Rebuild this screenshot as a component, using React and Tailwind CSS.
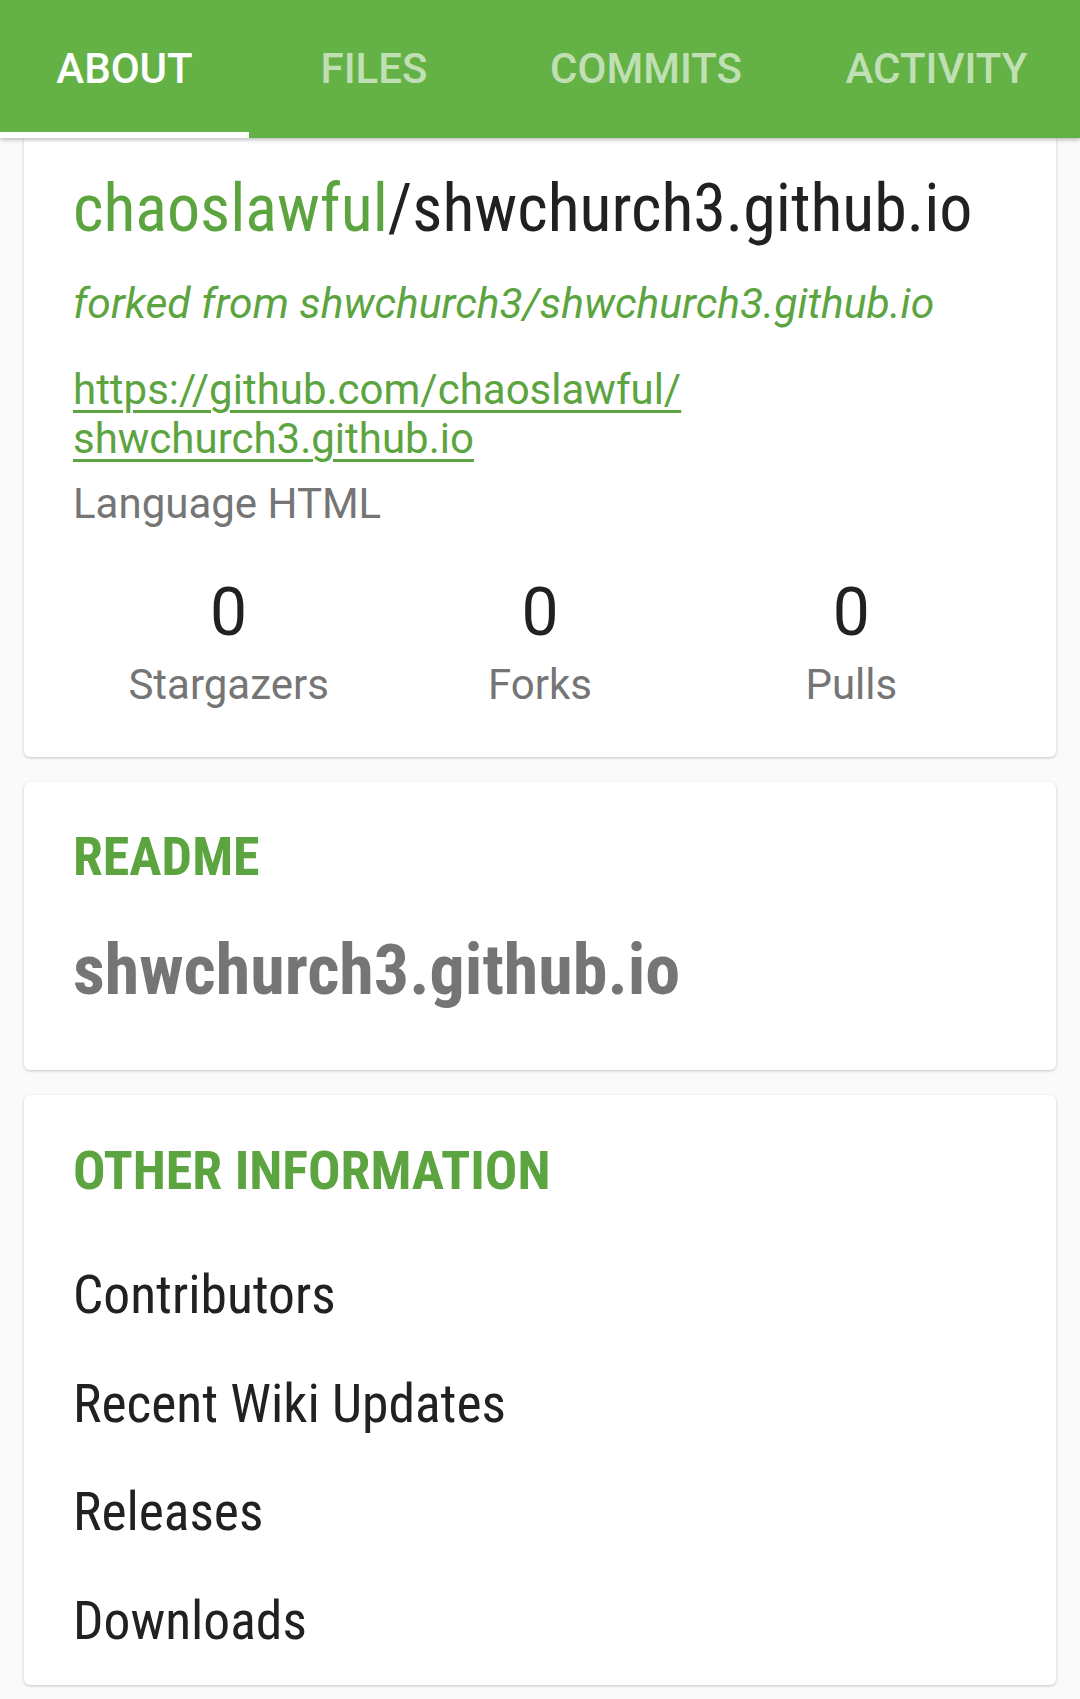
import React from 'react';

const tabs = [
  { label: 'ABOUT', w: 'w-[249px]', active: true },
  { label: 'FILES', w: 'w-[250px]' },
  { label: 'COMMITS', w: 'w-[294px]' },
  { label: 'ACTIVITY', w: 'w-[287px]' },
];

const stats = [
  { value: 0, label: 'Stargazers' },
  { value: 0, label: 'Forks' },
  { value: 0, label: 'Pulls' },
];

const otherInfo = ['Contributors', 'Recent Wiki Updates', 'Releases', 'Downloads'];

function Card({ className = '', children }) {
  return (
    <div className={`mx-[24px] bg-white rounded-[6px] shadow-[0_1px_3px_rgba(0,0,0,0.22)] px-[49px] ${className}`}>
      {children}
    </div>
  );
}

export default function App() {
  return (
    <div className="min-h-[1699px] bg-[#fafafa] font-['Roboto',sans-serif]">
      {/* tab bar */}
      <div className="relative z-10 flex h-[138px] bg-[#64b246] shadow-[0_2px_4px_rgba(0,0,0,0.25)]">
        {tabs.map((t) => (
          <div key={t.label} className={`${t.w} relative flex items-center justify-center`}>
            <span
              className={`text-[42px] leading-none font-medium ${
                t.active ? 'text-white' : 'text-white/60'
              }`}
            >
              {t.label}
            </span>
            {t.active && <div className="absolute bottom-0 left-0 right-0 h-[6px] bg-white" />}
          </div>
        ))}
      </div>

      {/* repo card */}
      <Card className="rounded-t-none pt-[32px] pb-[48px]">
        <h1 className="text-[66px] leading-[78px] font-stretch-condensed text-[#212121] whitespace-nowrap">
          <span className="text-[#5ca43f]">chaoslawful</span>/shwchurch3.github.io
        </h1>
        <p className="mt-[30px] text-[42.6px] leading-[50px] italic text-[#5ca43f]">
          forked from shwchurch3/shwchurch3.github.io
        </p>
        <a
          href="#"
          className="block mt-[37px] text-[42px] leading-[49px] text-[#5ca43f] underline decoration-[3px] underline-offset-[6px]"
        >
          https://github.com/chaoslawful/
          <br />
          shwchurch3.github.io
        </a>
        <p className="mt-[16px] text-[42px] leading-[49px] text-[#757575]">Language HTML</p>
        <div className="mt-[46px] grid grid-cols-3">
          {stats.map((s) => (
            <div key={s.label} className="flex flex-col items-center">
              <span className="text-[66px] leading-[77px] text-[#212121]">{s.value}</span>
              <span className="mt-[9px] text-[42px] leading-[49px] text-[#757575]">{s.label}</span>
            </div>
          ))}
        </div>
      </Card>

      {/* readme */}
      <Card className="mt-[25px] pt-[43px] pb-[60px]">
        <h2 className="text-[54px] leading-[63px] font-bold font-stretch-condensed text-[#5ca43f]">README</h2>
        <p className="mt-[42px] text-[70px] leading-[80px] font-bold font-stretch-condensed text-[#757575]">
          shwchurch3.github.io
        </p>
      </Card>

      {/* other info */}
      <Card className="mt-[25px] pt-[44px] pb-[10px]">
        <h2 className="text-[54px] leading-[63px] font-bold font-stretch-condensed text-[#5ca43f]">
          OTHER INFORMATION
        </h2>
        <ul className="mt-[39px]">
          {otherInfo.map((item) => (
            <li key={item} className="text-[53.5px] leading-[108.5px] font-stretch-condensed text-[#212121]">
              {item}
            </li>
          ))}
        </ul>
      </Card>
    </div>
  );
}
